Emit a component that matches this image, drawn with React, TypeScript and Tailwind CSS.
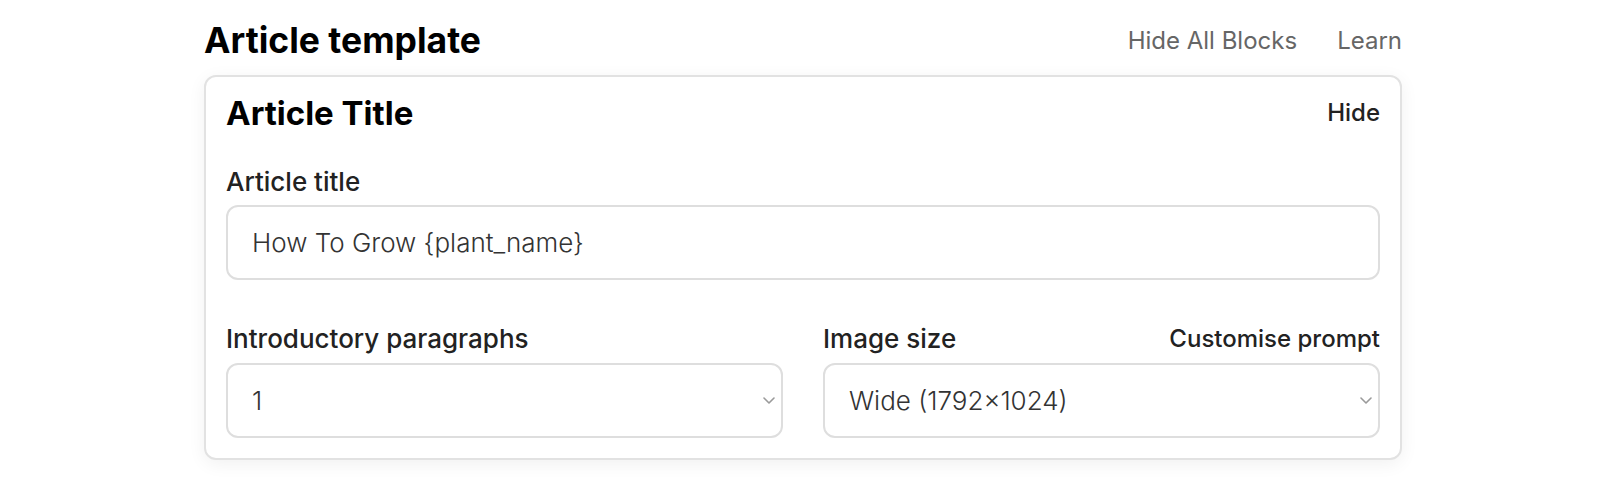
import React from "react";

const Chevron = () => (
  <svg width="12" height="7" viewBox="0 0 12 7" fill="none" className="shrink-0">
    <path d="M1 1l5 5 5-5" stroke="#9a9a9a" strokeWidth="1.6" strokeLinecap="round" strokeLinejoin="round" />
  </svg>
);

const Select = ({ value }: { value: string }) => (
  <div className="flex h-[75px] items-center justify-between rounded-xl border-2 border-[#dedede] bg-white pl-6 pr-[6px] text-[26px] font-light text-[#333]">
    <span>{value}</span>
    <Chevron />
  </div>
);

const App = () => {
  return (
    <div className="min-h-screen bg-white font-['Inter',sans-serif] text-black">
      <div className="mx-auto w-[1198px] pt-5">
        <div className="flex flex-row items-center justify-between">
          <h1 className="text-[35.5px] font-bold leading-[42px]">Article template</h1>
          <div className="flex flex-row items-center gap-10 text-[24px] text-[#666]">
            <span>Hide All Blocks</span>
            <span>Learn</span>
          </div>
        </div>

        <div className="mt-[13px] rounded-xl border-2 border-[#e2e2e2] bg-white px-5 pb-5 pt-4 shadow-[0_4px_18px_rgba(0,0,0,0.06)]">
          <div className="flex flex-row items-center justify-between">
            <h2 className="text-[33px] font-bold leading-10">Article Title</h2>
            <span className="text-[24px] font-medium text-[#222]">Hide</span>
          </div>

          <label className="mt-[33px] block text-[26px] font-medium leading-8 text-[#222]">Article title</label>
          <div className="mt-[7px] flex h-[75px] items-center rounded-xl border-2 border-[#dedede] bg-white px-6 text-[26px] font-light text-[#333]">
            How To Grow {"{plant_name}"}
          </div>

          <div className="mt-[43px] grid grid-cols-2 gap-10">
            <div className="flex flex-col">
              <label className="block text-[26px] font-medium leading-8 text-[#222]">Introductory paragraphs</label>
              <div className="mt-2">
                <Select value="1" />
              </div>
            </div>
            <div className="flex flex-col">
              <div className="flex flex-row items-center justify-between">
                <label className="block text-[26px] font-medium leading-8 text-[#222]">Image size</label>
                <span className="text-[24px] font-medium leading-8 text-[#222]">Customise prompt</span>
              </div>
              <div className="mt-2">
                <Select value="Wide (1792×1024)" />
              </div>
            </div>
          </div>
        </div>
      </div>
    </div>
  );
};

export default App;
